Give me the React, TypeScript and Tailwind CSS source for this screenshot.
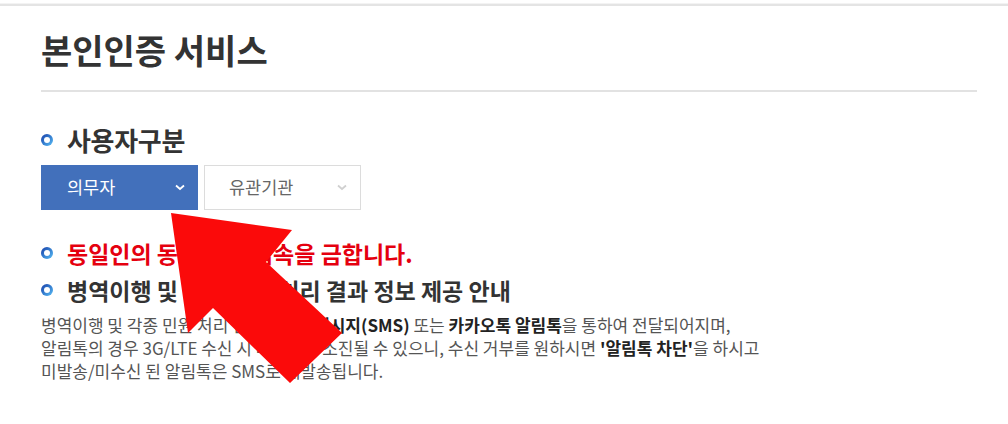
import React from "react";

const font = { fontFamily: '"Noto Sans CJK KR", "Noto Sans", sans-serif' };

function Bullet() {
  return (
    <span className="inline-flex h-[12px] w-[12px] shrink-0 items-center justify-center rounded-full bg-linear-to-br from-[#1c3aa6] to-[#5cc0f7]">
      <span className="h-[6px] w-[6px] rounded-full bg-white" />
    </span>
  );
}

function Chevron({ color }: { color: string }) {
  return (
    <svg width="10" height="7" viewBox="0 0 10 7" fill="none">
      <path d="M1 1.5 L5 5 L9 1.5" stroke={color} strokeWidth="1.8" />
    </svg>
  );
}

export default function App() {
  return (
    <div className="relative h-[424px] w-[1008px] overflow-hidden bg-white" style={font}>
      <div className="h-[4px] border-b border-[#f3f3f3]" />
      <div className="h-[2px] bg-[#e4e4e4]" />
      <div className="pl-[41px] pr-[31px]">
        <h1 className="pt-[21px] text-[34px] leading-[46px] font-semibold text-[#333]">
          본인인증 서비스
        </h1>
        <div className="mt-[17px] h-[2px] bg-[#e2e2e2]" />

        <div className="mt-[33px] flex items-center gap-[14px]">
          <Bullet />
          <span className="text-[26px] leading-[30px] font-bold tracking-[-0.3px] text-[#333]">사용자구분</span>
        </div>

        <div className="mt-[10px] flex gap-[6px]">
          <div className="flex h-[45px] w-[157px] items-center justify-between bg-[#4270bb] pl-[26px] pr-[13px] text-[17.5px] text-white">
            <span>의무자</span>
            <Chevron color="#ffffff" />
          </div>
          <div className="flex h-[45px] w-[157px] items-center justify-between border border-[#dcdcdc] bg-white pl-[24px] pr-[13px] text-[17.5px] text-[#666]">
            <span>유관기관</span>
            <Chevron color="#d0d0d0" />
          </div>
        </div>

        <div className="mt-[28px] flex items-center gap-[14px]">
          <Bullet />
          <span className="text-[23px] leading-[30px] font-bold text-[#e5000f]">
            동일인의 동시 중복 접속을 금합니다.
          </span>
        </div>
        <div className="mt-[7px] flex items-center gap-[14px]">
          <Bullet />
          <span className="text-[23px] leading-[30px] font-bold text-[#333]">
            병역이행 및 각종 민원 처리 결과 정보 제공 안내
          </span>
        </div>

        <div className="mt-[8px] text-[17px] leading-[23px] text-[#555]">
          <p>
            병역이행 및 각종 민원 처리 결과는 <b className="text-[#222]">문자메시지(SMS)</b> 또는{" "}
            <b className="text-[#222]">카카오톡 알림톡</b>을 통하여 전달되어지며,
          </p>
          <p>
            알림톡의 경우 3G/LTE 수신 시 데이터가 소진될 수 있으니, 수신 거부를 원하시면{" "}
            <b className="text-[#222]">'알림톡 차단'</b>을 하시고
          </p>
          <p>미발송/미수신 된 알림톡은 SMS로 재발송됩니다.</p>
        </div>
      </div>

      <svg className="pointer-events-none absolute left-0 top-0" width="1008" height="424" viewBox="0 0 1008 424">
        <polygon
          points="171,213 292,230 266,262 342,333 290,383 213,308 188,333"
          fill="#fb0a0a"
        />
      </svg>
    </div>
  );
}
